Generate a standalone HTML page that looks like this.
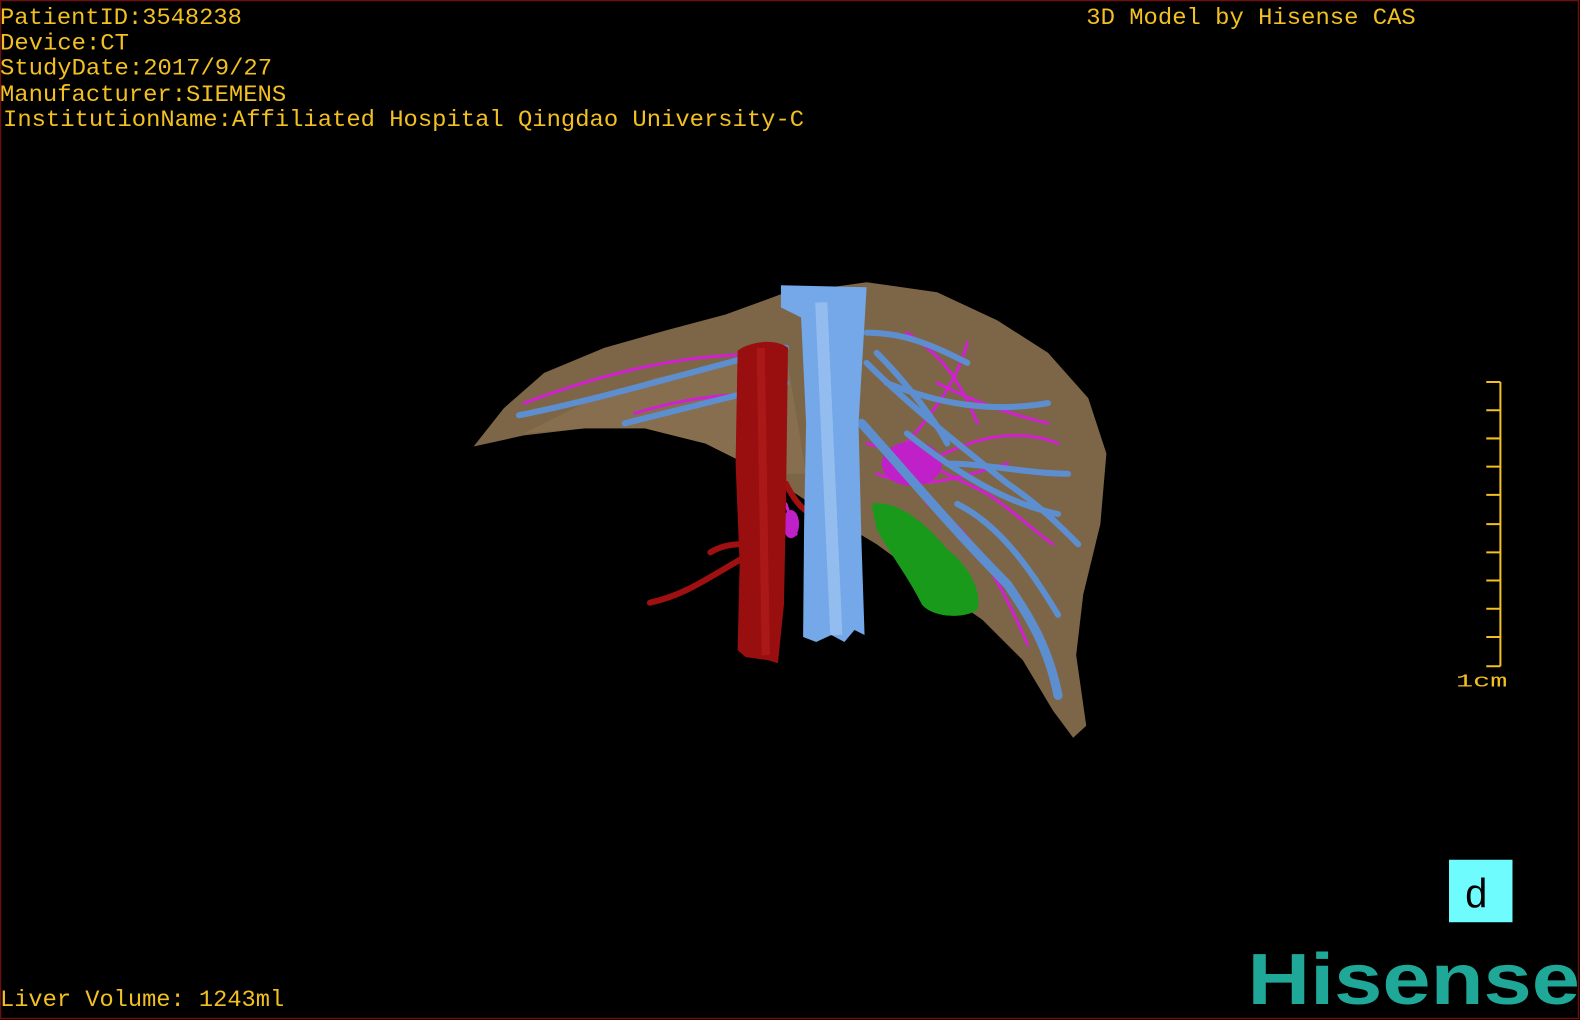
<!DOCTYPE html>
<html><head><style>
html,body{margin:0;padding:0;background:#000;overflow:hidden}
svg{display:block}
</style></head><body>
<svg width="1580" height="1020" viewBox="0 0 1568 1012" preserveAspectRatio="none" xmlns="http://www.w3.org/2000/svg">
<rect x="0" y="0" width="1568" height="1012" fill="#000"/>
<rect x="0.5" y="0.5" width="1566" height="1010" fill="none" stroke="#6a1010" stroke-width="1.5"/>
<g font-family="Liberation Mono, monospace" font-size="23" fill="#f2c022">
<text x="0" y="24" textLength="240" lengthAdjust="spacingAndGlyphs">PatientID:3548238</text>
<text x="0" y="49" textLength="128" lengthAdjust="spacingAndGlyphs">Device:CT</text>
<text x="0" y="74" textLength="270" lengthAdjust="spacingAndGlyphs">StudyDate:2017/9/27</text>
<text x="0" y="100" textLength="284" lengthAdjust="spacingAndGlyphs">Manufacturer:SIEMENS</text>
<text x="3" y="125" textLength="795" lengthAdjust="spacingAndGlyphs">InstitutionName:Affiliated Hospital Qingdao University-C</text>
<text x="1078" y="24" textLength="327" lengthAdjust="spacingAndGlyphs">3D Model by Hisense CAS</text>
<text x="0" y="998" textLength="282" lengthAdjust="spacingAndGlyphs">Liver Volume: 1243ml</text>
<text x="1445" y="681" font-size="18" textLength="51" lengthAdjust="spacingAndGlyphs">1cm</text>
</g>
<!-- scale bar -->
<g stroke="#f2c022" stroke-width="2" fill="none">
<line x1="1489" y1="379" x2="1489" y2="661"/>
<path d="M1475 379H1489M1475 407H1489M1475 435H1489M1475 463H1489M1475 491H1489M1475 520H1489M1475 548H1489M1475 576H1489M1475 604H1489M1475 632H1489M1475 661H1489"/>
</g>
<!-- liver -->
<path d="M470 443 L500 405 L540 370 L600 345 L660 328 L720 312 L775 292 L860 280 L930 290 L990 318 L1040 350 L1080 395 L1098 450 L1092 520 L1075 590 L1068 650 L1078 720 L1065 732 L1045 705 L1015 655 L975 615 L925 580 L870 540 L820 510 L760 470 L700 440 L640 425 L580 425 L520 432 Z" fill="#7d6647"/>
<path d="M520 430 L580 400 L650 375 L720 360 L780 350 L800 470 L760 470 L700 440 L640 425 L580 425 Z" fill="#8a7252" opacity="0.7"/>
<!-- magenta vessels -->
<g stroke="#d020d0" stroke-width="3" fill="none" stroke-linecap="round">
<path d="M520 400 C600 370 680 350 760 352"/>
<path d="M630 410 C680 395 720 390 760 392"/>
<path d="M860 440 C900 450 940 470 980 490 C1010 510 1030 530 1045 540"/>
<path d="M880 460 C920 420 950 380 960 340"/>
<path d="M900 470 C950 440 1000 420 1050 440"/>
<path d="M920 500 C960 520 990 570 1020 640"/>
<path d="M870 470 C920 490 960 470 1000 460"/>
<path d="M930 380 C970 400 1000 410 1040 420"/>
<path d="M900 330 C930 350 950 370 970 420"/>
<path d="M780 500 L790 530"/>
</g>
<g fill="#c020c8"><ellipse cx="905" cy="460" rx="30" ry="22"/><ellipse cx="785" cy="520" rx="8" ry="14"/></g>
<!-- blue branches -->
<g stroke="#5d8fd0" stroke-width="6" fill="none" stroke-linecap="round">
<path d="M515 412 C600 395 680 370 780 345"/>
<path d="M620 420 C680 405 720 395 780 380"/>
<path d="M860 330 C900 330 930 345 960 360"/>
<path d="M855 420 C900 470 950 530 1000 580 C1020 610 1040 640 1050 690" stroke-width="9"/>
<path d="M860 360 C900 400 950 440 1000 480 C1030 500 1050 520 1070 540"/>
<path d="M880 380 C930 400 980 410 1040 400"/>
<path d="M900 430 C950 470 1000 500 1050 510"/>
<path d="M950 500 C990 520 1020 560 1050 610"/>
<path d="M940 460 C980 460 1020 470 1060 470"/>
<path d="M870 350 C900 380 930 420 940 440"/>
</g>
<!-- green -->
<path d="M865 500 C890 495 920 520 940 545 C960 560 975 585 970 605 C955 615 925 612 915 600 C900 570 880 545 870 525 Z" fill="#1a9a1a"/>
<!-- red vessel -->
<g stroke="#a01010" stroke-width="6" fill="none" stroke-linecap="round">
<path d="M735 555 C700 575 680 590 645 598"/>
<path d="M735 540 C720 540 710 545 705 548"/>
<path d="M780 480 C790 500 800 510 810 510"/>
</g>
<path d="M732 348 C745 338 770 336 782 345 L780 500 L778 600 L772 658 L762 655 L740 652 L732 645 L734 560 L730 460 Z" fill="#990e0e"/>
<path d="M755 345 L760 650" stroke="#b82020" stroke-width="8" opacity="0.6"/>
<!-- blue IVC -->
<path d="M775 283 L860 285 L858 320 L852 420 L855 540 L858 630 L848 625 L838 637 L825 630 L810 637 L797 632 L798 520 L800 420 L795 315 L775 305 Z" fill="#74a8e8"/>
<path d="M815 300 L830 630" stroke="#a8ccf5" stroke-width="12" opacity="0.6"/>
<!-- d box -->
<rect x="1438" y="853" width="63" height="62" fill="#6ffcff"/>
<text x="1453" y="900" font-family="Liberation Mono, monospace" font-size="40" fill="#000">d</text>
<!-- logo -->
<text x="1238" y="996" font-family="Liberation Sans, sans-serif" font-weight="bold" font-size="72" fill="#1fa898" textLength="330" lengthAdjust="spacingAndGlyphs">Hisense</text>
</svg>
</body></html>
